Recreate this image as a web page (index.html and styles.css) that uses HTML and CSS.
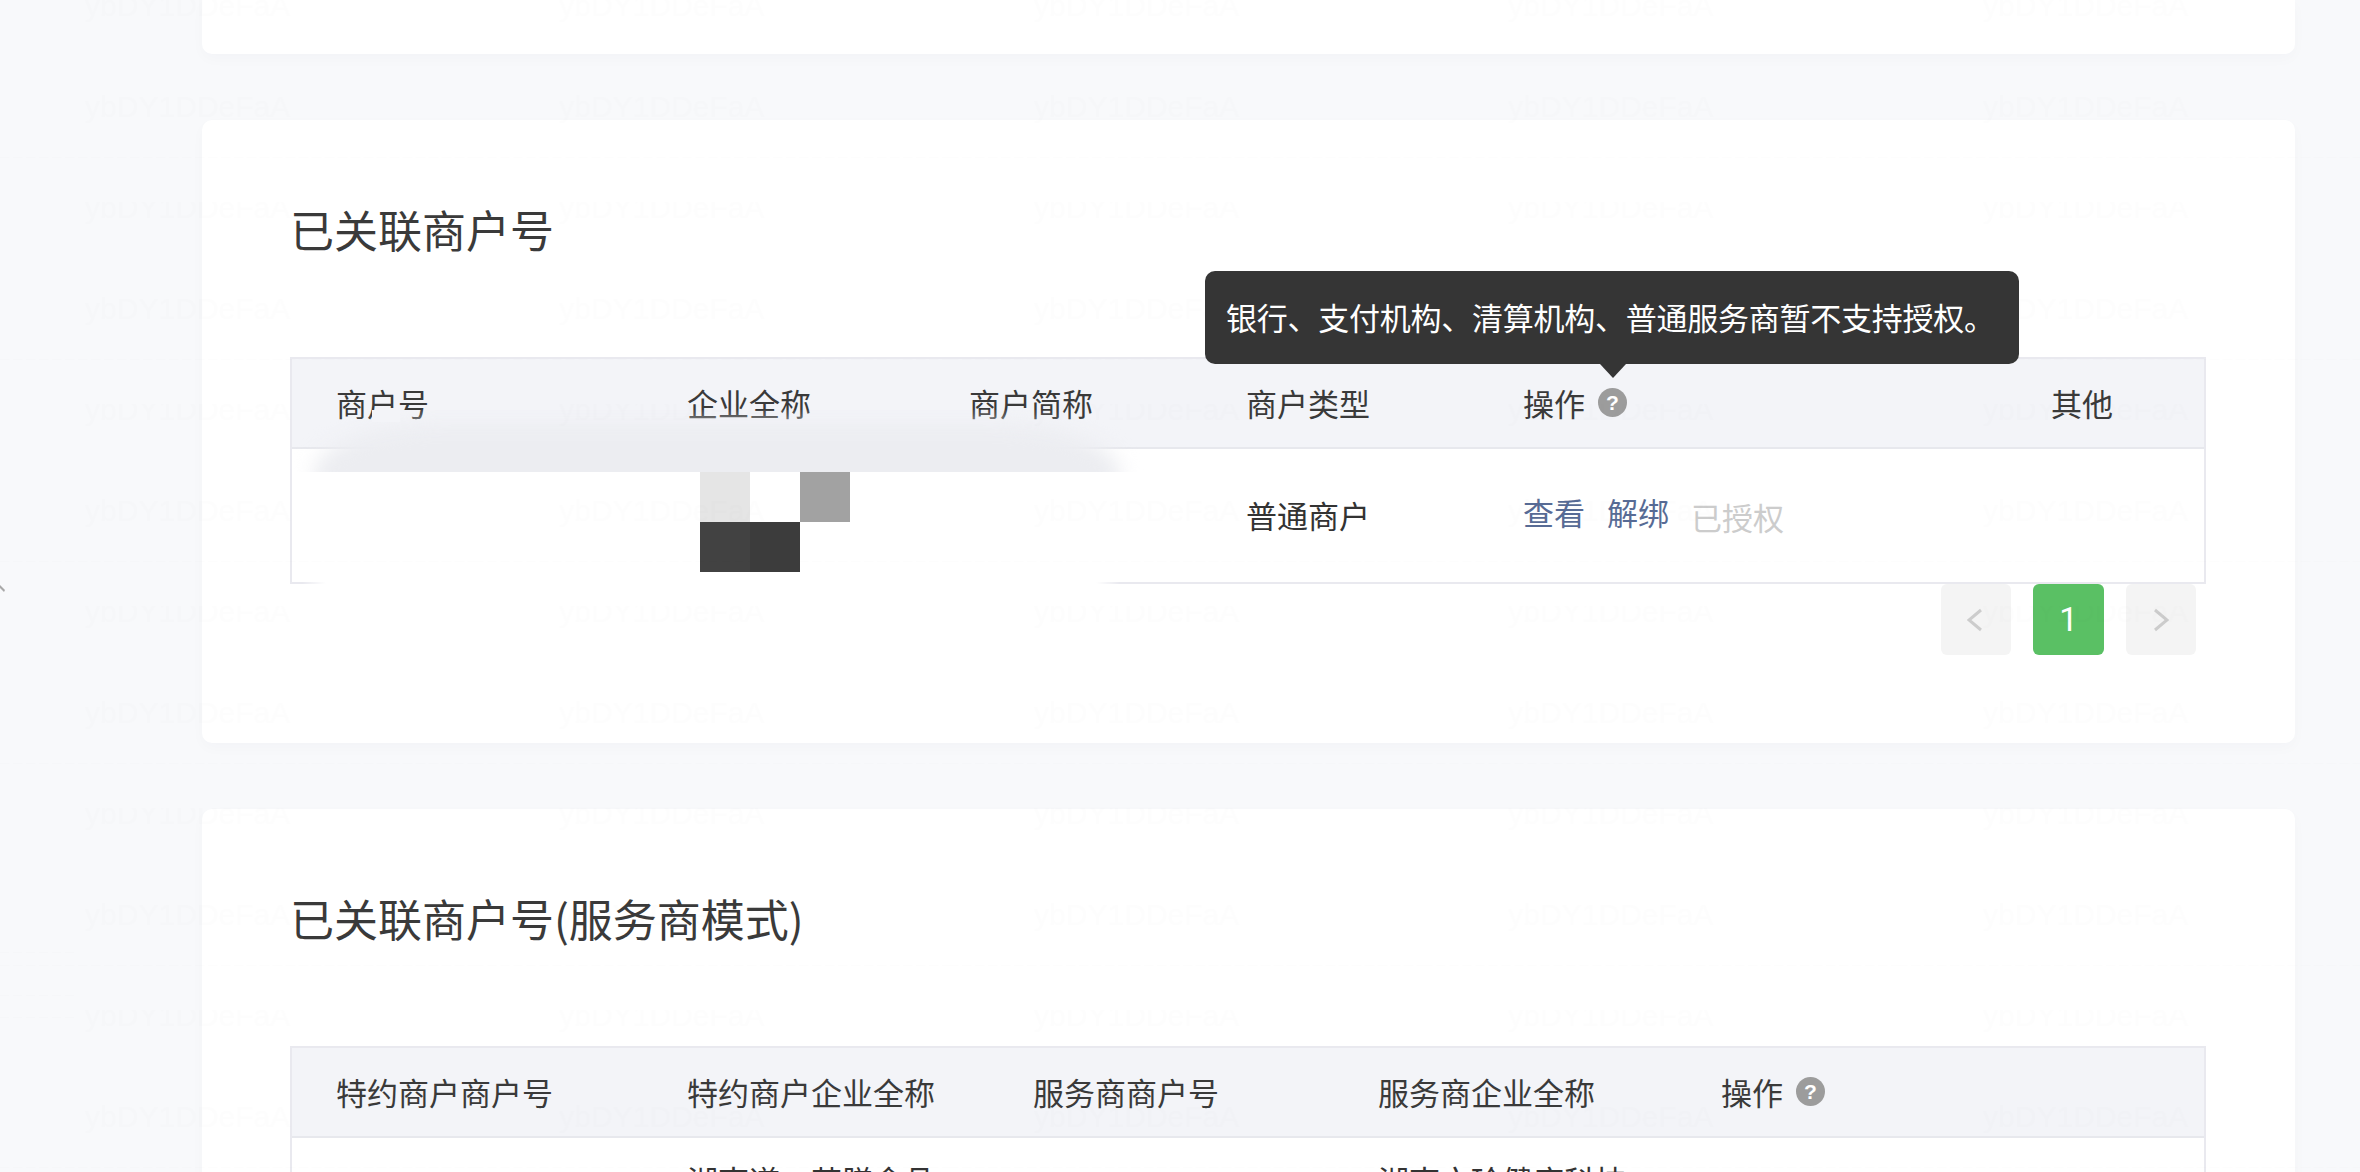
FILE: index.html
```html
<!DOCTYPE html>
<html lang="zh-CN">
<head>
<meta charset="utf-8">
<title>已关联商户号</title>
<link rel="stylesheet" href="styles.css">
</head>
<body>
<main class="page">
  <section class="card card-cut"></section>

  <section class="card">
    <h2 class="card-title">已关联商户号</h2>
    <table class="data-table table-a">
      <thead>
        <tr>
          <th class="a1">商户号</th>
          <th class="a2">企业全称</th>
          <th class="a3">商户简称</th>
          <th class="a4">商户类型</th>
          <th class="a5"><span class="op-head">操作<span class="help">?</span></span></th>
          <th class="a6">其他</th>
        </tr>
      </thead>
      <tbody>
        <tr>
          <td></td>
          <td></td>
          <td></td>
          <td>普通商户</td>
          <td>
            <div class="actions">
              <a class="link">查看</a>
              <a class="link">解绑</a>
              <span class="link-off">已授权</span>
            </div>
          </td>
          <td></td>
        </tr>
      </tbody>
    </table>
    <nav class="pager">
      <span class="page-btn"><svg class="chev chev-prev" viewBox="0 0 16 24"><polyline points="14,2 2,12 14,22"/></svg></span>
      <span class="page-btn page-on">1</span>
      <span class="page-btn"><svg class="chev" viewBox="0 0 16 24"><polyline points="2,2 14,12 2,22"/></svg></span>
    </nav>

    <div class="smear"><div class="smear-shape"></div></div>
    <div class="smear-gap"></div>
    <div class="smear-edge"></div>
    <div class="mosaic">
      <i class="m1"></i><i class="m0"></i><i class="m2"></i>
      <i class="m3"></i><i class="m4"></i><i class="m0"></i>
    </div>
    <div class="tooltip">银行、支付机构、清算机构、普通服务商暂不支持授权。</div>
  </section>

  <section class="card">
    <h2 class="card-title">已关联商户号(服务商模式)</h2>
    <table class="data-table table-b">
      <thead>
        <tr>
          <th class="b1">特约商户商户号</th>
          <th class="b2">特约商户企业全称</th>
          <th class="b3">服务商商户号</th>
          <th class="b4">服务商企业全称</th>
          <th class="b5"><span class="op-head">操作<span class="help">?</span></span></th>
        </tr>
      </thead>
      <tbody>
        <tr>
          <td></td>
          <td class="cell-top">湖南道一苹膳食品</td>
          <td></td>
          <td class="cell-top">湖南文玲健康科技</td>
          <td></td>
        </tr>
      </tbody>
    </table>
  </section>
</main>

<svg class="left-mark" viewBox="0 0 6 8"><path d="M0 0 L5 5 L4 7 L0 3 Z"/></svg>

<svg class="watermark" width="2360" height="1172">
  <defs>
    <pattern id="wm" width="474.5" height="202" patternUnits="userSpaceOnUse">
      <text class="wm-text" x="85" y="16">ybDY1DDeFaA</text>
      <text class="wm-text" x="85" y="117">ybDY1DDeFaA</text>
      <line class="wm-line" x1="0" y1="157.5" x2="474.5" y2="157.5"/>
    </pattern>
  </defs>
  <rect width="2360" height="1172" fill="url(#wm)"/>
  <line class="wm-line" x1="0" y1="952.5" x2="78" y2="952.5"/>
  <line class="wm-line" x1="0" y1="995.5" x2="78" y2="995.5"/>
  <line class="wm-line" x1="0" y1="1017.5" x2="78" y2="1017.5"/>
</svg>
</body>
</html>
```
FILE: styles.css
```css
* { box-sizing: border-box; }

html, body {
  margin: 0;
  height: 1172px;
  overflow: hidden;
}

body {
  position: relative;
  background: #f8f9fb;
  color: #383838;
  font-family: "Noto Sans CJK SC", "Liberation Sans", sans-serif;
}

.page {
  display: flex;
  flex-direction: column;
  gap: 66px;
  width: 2093px;
  margin-left: 202px;
}

.card {
  position: relative;
  flex: none;
  padding: 79px 88px 88px;
  background: #fff;
  border-radius: 10px;
  box-shadow: 0 5px 14px rgba(40, 50, 70, 0.025);
}

.card-cut {
  height: 54px;
  padding: 0;
  border-radius: 0 0 10px 10px;
}

.card-title {
  margin: 0 0 98px;
  font-size: 44px;
  font-weight: 400;
  line-height: 60px;
  color: #3a3a3a;
}

.data-table {
  width: 1916px;
  table-layout: fixed;
  border: 2px solid #e9e9ef;
  border-spacing: 0;
  border-collapse: separate;
  font-size: 31px;
}

.data-table th {
  height: 90px;
  padding: 0 0 2px 44px;
  background: #f3f4f8;
  border-bottom: 2px solid #e7e8ed;
  font-weight: 400;
  text-align: left;
  color: #3a3a3a;
}

.data-table td {
  height: 133px;
  padding: 0 0 2px 44px;
  color: #333;
}

.data-table td.cell-top {
  vertical-align: top;
  padding-top: 17px;
  line-height: 50px;
}

.a1 { width: 351px; }
.a2 { width: 282px; }
.a3 { width: 277px; }
.a4 { width: 277px; }
.a5 { width: 528px; }
.a6 { width: 197px; }

.b1 { width: 351px; }
.b2 { width: 346px; }
.b3 { width: 345px; }
.b4 { width: 343px; }
.b5 { width: 527px; }

.op-head {
  display: inline-flex;
  align-items: center;
  gap: 13px;
}

.help {
  display: flex;
  align-items: center;
  justify-content: center;
  width: 29px;
  height: 29px;
  border-radius: 50%;
  background: #9c9c9c;
  color: #fff;
  font-family: "Liberation Sans", sans-serif;
  font-size: 21px;
  font-weight: 700;
  line-height: 1;
}

.actions {
  display: flex;
  align-items: flex-start;
  margin-bottom: 1px;
}

.link {
  margin-right: 22px;
  color: #576b95;
}

.link-off {
  margin-top: 5px;
  color: #cccccc;
}

.pager {
  display: flex;
  justify-content: flex-end;
  gap: 22px;
  margin: 0 11px 0 0;
}

.page-btn {
  display: flex;
  align-items: center;
  justify-content: center;
  width: 70px;
  height: 71px;
  border-radius: 6px;
  background: #f4f4f4;
}

.page-on {
  width: 71px;
  background: #5ac064;
  color: #fff;
  font-family: Roboto, "Liberation Sans", sans-serif;
  font-size: 33px;
  font-weight: 400;
}

.chev {
  width: 16px;
  height: 24px;
  fill: none;
  stroke: #cccccc;
  stroke-width: 3;
}

.chev-prev {
  margin-right: 2px;
}

/* redaction smear that lies over the first data row */
.smear {
  position: absolute;
  left: 88px;
  top: 290px;
  width: 870px;
  height: 62px;
  overflow: hidden;
}

.smear-shape {
  position: absolute;
  left: 24px;
  top: 14px;
  width: 806px;
  height: 110px;
  background: #ecedf1;
  border-radius: 120px 120px 0 0 / 50px 50px 0 0;
  filter: blur(10px);
}

.smear-gap {
  position: absolute;
  left: 170px;
  top: 290px;
  width: 28px;
  height: 12px;
  background: #f3f4f8;
}

.smear-edge {
  position: absolute;
  left: 100px;
  top: 462px;
  width: 818px;
  height: 2px;
  background: linear-gradient(to right, transparent, #fff 24px, #fff calc(100% - 24px), transparent);
}

.mosaic {
  position: absolute;
  left: 498px;
  top: 352px;
  display: grid;
  grid-template-columns: repeat(3, 50px);
  grid-auto-rows: 50px;
}

.m0 { background: #fff; }
.m1 { background: #e5e5e5; }
.m2 { background: #a2a2a2; }
.m3 { background: #424242; }
.m4 { background: #3c3c3c; }

.tooltip {
  position: absolute;
  left: 1003px;
  top: 151px;
  width: 814px;
  height: 93px;
  padding: 0 0 0 21px;
  border-radius: 10px;
  background: #353535;
  color: #fff;
  font-size: 31px;
  letter-spacing: -0.25px;
  line-height: 91px;
  white-space: nowrap;
}

.tooltip::after {
  content: "";
  position: absolute;
  left: 395px;
  top: 93px;
  border-style: solid;
  border-width: 14px 13px 0;
  border-color: #353535 transparent transparent;
}

.left-mark {
  position: absolute;
  left: 0;
  top: 585px;
  width: 6px;
  height: 8px;
  fill: #a8a8a8;
}

.watermark {
  position: absolute;
  left: 0;
  top: 0;
  pointer-events: none;
}

.wm-text {
  font-family: "Liberation Sans", sans-serif;
  font-size: 30px;
  fill: #000;
  fill-opacity: 0.006;
}

.wm-line {
  stroke: #000;
  stroke-opacity: 0.006;
  stroke-width: 1;
  stroke-dasharray: 9 4;
}
```
